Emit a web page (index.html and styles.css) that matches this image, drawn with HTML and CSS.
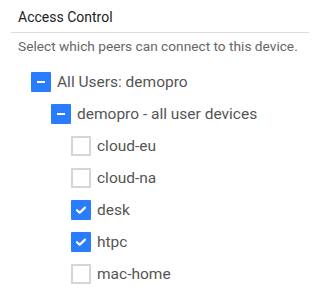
FILE: index.html
```html
<!DOCTYPE html>
<html>
<head>
<meta charset="utf-8">
<link rel="stylesheet" href="styles.css">
</head>
<body>
<div class="panel">
  <div class="title">Access Control</div>
  <div class="desc">Select which peers can connect to this device.</div>
  <ul class="tree">
    <li class="row lvl1"><span class="box partial"></span><span class="label">All Users: demopro</span></li>
    <li class="row lvl2"><span class="box partial"></span><span class="label">demopro - all user devices</span></li>
    <li class="row lvl3"><span class="box"></span><span class="label">cloud-eu</span></li>
    <li class="row lvl3"><span class="box"></span><span class="label">cloud-na</span></li>
    <li class="row lvl3"><span class="box checked"><svg viewBox="0 0 20 20" width="20" height="20"><path d="M6 10.2 L8.7 12.8 L14 7.6" fill="none" stroke="#fff" stroke-width="2.2" stroke-linecap="round" stroke-linejoin="round"/></svg></span><span class="label">desk</span></li>
    <li class="row lvl3"><span class="box checked"><svg viewBox="0 0 20 20" width="20" height="20"><path d="M6 10.2 L8.7 12.8 L14 7.6" fill="none" stroke="#fff" stroke-width="2.2" stroke-linecap="round" stroke-linejoin="round"/></svg></span><span class="label">htpc</span></li>
    <li class="row lvl3"><span class="box"></span><span class="label">mac-home</span></li>
  </ul>
</div>
</body>
</html>
```
FILE: styles.css
```css
html, body {
  margin: 0;
  padding: 0;
  background: #fff;
}
body {
  font-family: Roboto, "Liberation Sans", sans-serif;
}
.panel {
  padding: 0 11px;
}
.title {
  font-size: 14px;
  color: #222;
  padding: 9px 7px 0;
  height: 23px;
  line-height: 17px;
  border-bottom: 1px solid #dcdcdc;
}
.desc {
  font-size: 13.7px;
  color: #666;
  padding: 6px 7px 0;
  line-height: 15px;
}
.tree {
  list-style: none;
  margin: 12px 0 0;
  padding: 0;
}
.row {
  display: flex;
  align-items: center;
  height: 32px;
}
.lvl1 { padding-left: 20px; }
.lvl2 { padding-left: 40px; }
.lvl3 { padding-left: 60px; }
.box {
  box-sizing: border-box;
  width: 20px;
  height: 20px;
  border: 2px solid #d3d5d8;
  background: #fff;
  flex: none;
  position: relative;
  border-radius: 1px;
}
.box.partial, .box.checked {
  background: #2a7cff;
  border-color: #2a7cff;
}
.box.partial::after {
  content: "";
  position: absolute;
  left: 4px;
  top: 7px;
  width: 8px;
  height: 2px;
  background: #fff;
}
.box svg {
  position: absolute;
  left: -2px;
  top: -2px;
}
.label {
  margin-left: 6px;
  font-size: 15.5px;
  color: #555;
  line-height: 20px;
}
```
